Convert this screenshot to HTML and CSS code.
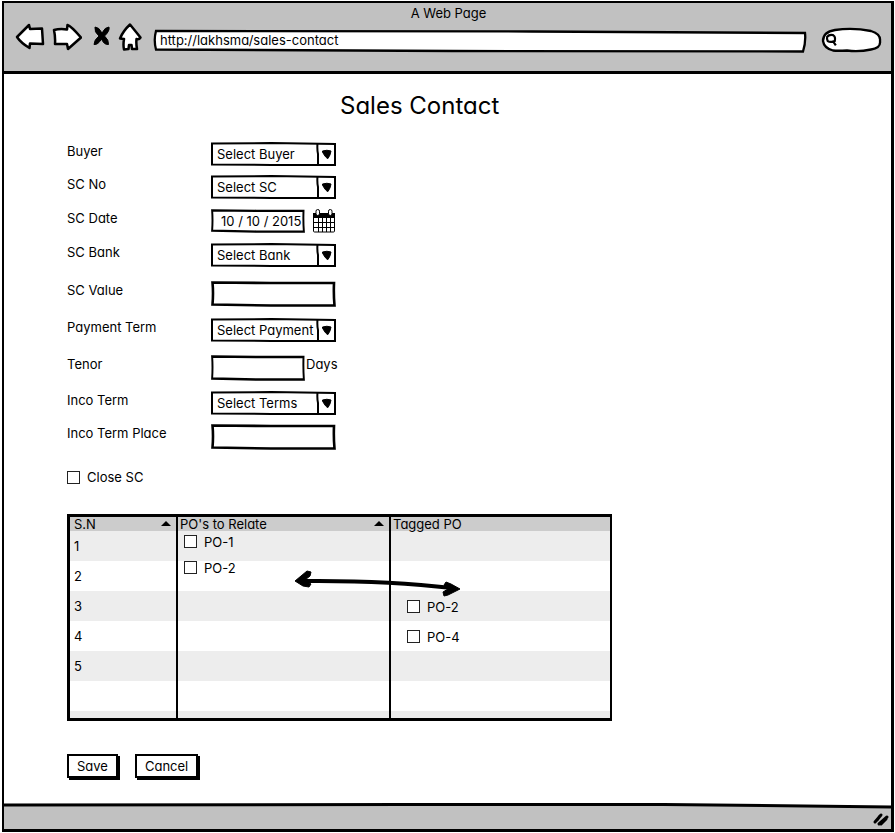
FILE: index.html
```html
<!DOCTYPE html>
<html lang="en">
<head>
<meta charset="utf-8">
<title>A Web Page</title>
<link rel="stylesheet" href="styles.css">
</head>
<body>
<div class="window">
  <header class="chrome">
    <div class="chrome-title">A Web Page</div>
    <div class="toolbar">
      <button class="tool back" type="button" aria-label="Back">
        <svg width="30" height="28" viewBox="0 0 30 28"><path d="M2 14 L14 2 L15 6 L27 5.500 L28 21 L15 20.500 L14.500 25 Q6 20 2 14Z"/></svg>
      </button>
      <button class="tool forward" type="button" aria-label="Forward">
        <svg width="30" height="28" viewBox="0 0 30 28"><path d="M2 7 Q8 5.500 15 6.500 L15.500 2 Q19 3 29 14.500 L16 26 L15 21 L3 21 Q3.500 14 2 7Z"/></svg>
      </button>
      <button class="tool stop" type="button" aria-label="Stop">
        <svg width="18" height="28" viewBox="0 0 18 28"><path class="solid" d="M2 4 Q6 4 9 10 Q12 4 16 4 Q17 8 11.500 13 Q16 17 15.500 21.500 Q11 22 8.500 16 Q5 22 1 21.500 Q1 17 6 13 Q1 9 2 4Z"/></svg>
      </button>
      <button class="tool home" type="button" aria-label="Home">
        <svg width="24" height="28" viewBox="0 0 24 28"><path d="M12 1.500 L22.500 14.500 Q21 17 18.500 16 Q18 21 19 26 L14 26 L13.500 22 L11 22 L10.500 26 L6 26.500 Q5 22 6 16 L2 15.500 Q5 8 12 1.500Z"/></svg>
      </button>
      <input class="address" type="text" value="http://lakhsma/sales-contact" aria-label="Address">
      <div class="search">
        <svg width="13" height="16" viewBox="0 0 12 14"><path d="M2 4 Q4 1.500 7.500 2.500 Q10 4 9 8 Q5 9.500 2.500 8 Q1.500 6 2 4Z M6.500 8 L8 9 L10 12"/></svg>
        <input type="search" aria-label="Search">
      </div>
    </div>
  </header>

  <main class="page">
    <h1>Sales Contact</h1>
    <form>
      <div class="fields">
        <label for="buyer">Buyer</label>
        <select id="buyer"><option>Select Buyer</option></select>

        <label for="sc-no">SC No</label>
        <select id="sc-no"><option>Select SC</option></select>

        <label for="sc-date">SC Date</label>
        <div class="inline">
          <input id="sc-date" class="short date" type="text" value="10 / 10 / 2015">
          <button class="calendar" type="button" aria-label="Pick a date">
            <svg width="24" height="24" viewBox="0 0 24 24"><rect x="1.500" y="4.500" width="21" height="18.500" rx="1" fill="#fff" stroke="#000"/><path d="M1 4h22v5H1z"/><path d="M1 13.500h22M1 18.500h22M6.500 8v15M10.500 8v15M14.500 8v15M18.500 8v15" fill="none" stroke="#000"/><rect x="4" y="0.500" width="3.500" height="6" rx="1.700" fill="#fff" stroke="#000"/><rect x="16.500" y="0.500" width="3.500" height="6" rx="1.700" fill="#fff" stroke="#000"/></svg>
          </button>
        </div>

        <label for="sc-bank">SC Bank</label>
        <select id="sc-bank"><option>Select Bank</option></select>

        <label for="sc-value">SC Value</label>
        <input id="sc-value" class="text" type="text">

        <label for="payment">Payment Term</label>
        <select id="payment"><option>Select Payment</option></select>

        <label for="tenor">Tenor</label>
        <div class="inline">
          <input id="tenor" class="text short" type="text">
          <span class="unit">Days</span>
        </div>

        <label for="inco">Inco Term</label>
        <select id="inco"><option>Select Terms</option></select>

        <label for="place">Inco Term Place</label>
        <input id="place" class="text" type="text">
      </div>

      <label class="check close"><input type="checkbox">Close SC</label>

      <div class="orders">
        <table>
          <thead>
            <tr>
              <th class="col-sn" scope="col"><span class="head">S.N<i class="sort"></i></span></th>
              <th class="col-relate" scope="col"><span class="head">PO's to Relate<i class="sort"></i></span></th>
              <th scope="col">Tagged PO</th>
            </tr>
          </thead>
          <tbody>
            <tr><td>1</td><td class="relate first"><label class="check"><input type="checkbox">PO-1</label></td><td></td></tr>
            <tr><td>2</td><td class="relate"><label class="check"><input type="checkbox">PO-2</label></td><td></td></tr>
            <tr><td>3</td><td></td><td class="tagged"><label class="check"><input type="checkbox">PO-2</label></td></tr>
            <tr><td>4</td><td></td><td class="tagged"><label class="check"><input type="checkbox">PO-4</label></td></tr>
            <tr><td>5</td><td></td><td></td></tr>
            <tr><td></td><td></td><td></td></tr>
            <tr class="partial"><td></td><td></td><td></td></tr>
          </tbody>
        </table>
        <svg class="arrow" width="168" height="28" viewBox="0 0 168 28" aria-hidden="true"><path d="M6 11 Q90 10 158 18" fill="none" stroke="#000" stroke-width="4"/><path d="M1 11 L13 1 L17 2 L16 6 L11 10 L17 14 L15 17 L9 16Z M166 19 L157 14 L152 12 L150 15 L154 19 L149 22 L150 26 L154 25Z" stroke="#000" stroke-linejoin="round"/></svg>
      </div>

      <div class="actions">
        <button class="action" type="submit">Save</button>
        <button class="action" type="button">Cancel</button>
      </div>
    </form>
  </main>

  <footer class="status">
    <svg width="18" height="16" viewBox="0 0 18 16" aria-hidden="true"><path d="M3 11 L9 4 M7 13 L15 6 M5 9 L8 5 M9 13 L14 8" fill="none" stroke="#000" stroke-width="3" stroke-linecap="round"/></svg>
  </footer>
</div>
</body>
</html>
```
FILE: styles.css
```css
* { box-sizing: border-box; }

body {
  margin: 0;
  background: #fff;
  color: #000;
  font: 13px/18px Inter, "Liberation Sans", sans-serif;
  font-feature-settings: "cv11";
}

input, select, button {
  margin: 0;
  padding: 0;
  border: 0;
  border-radius: 0;
  background: none;
  color: inherit;
  font: inherit;
  font-feature-settings: inherit;
  appearance: none;
}

.window {
  display: flex;
  flex-direction: column;
  min-height: calc(100vh - 2px);
  margin: 1px 1px 1px 2px;
  border: 2px solid #000;
  border-right-width: 3px;
  border-bottom-width: 3px;
}

.chrome {
  height: 71px;
  padding: 1px 9px 0 11px;
  border-bottom: 3px solid #000;
  background: #c1c1c1;
}

.chrome-title { text-align: center; }

.toolbar {
  display: flex;
  align-items: center;
  height: 30px;
}

.tool { display: flex; }
.tool path { fill: #fff; stroke: #000; stroke-width: 2.5px; stroke-linejoin: round; }
.tool .solid { fill: #000; stroke-width: 1px; }
.forward { margin-left: 7px; }
.stop { margin-left: 11px; }
.home { margin-left: 7px; }

.address {
  flex: 1;
  height: 24px;
  margin: 8px 14px 0 11px;
  padding: 0 7px 2px;
  background: url("data:image/svg+xml,%3Csvg xmlns='http://www.w3.org/2000/svg' viewBox='0 0 656 24' preserveAspectRatio='none'%3E%3Cpath d='M3 2 L380 2.500 L654 4 Q655 13 652 22.500 L300 22 L3 20.500 Q0.500 11 3 2Z' fill='%23fff' stroke='%23000' stroke-width='2.300'/%3E%3C/svg%3E") center / 100% 100% no-repeat;
}

.search {
  display: flex;
  align-items: center;
  width: 61px;
  height: 26px;
  margin-top: 6px;
  padding-left: 4px;
  background: url("data:image/svg+xml,%3Csvg xmlns='http://www.w3.org/2000/svg' viewBox='0 0 61 26' preserveAspectRatio='none'%3E%3Cpath d='M2 14 Q2 5 14 3 Q32 0.500 50 4 Q60 7 59 14 Q60 21 50 22.500 Q38 25 26 23.500 Q16 24 12 23.500 Q3 21 2 14Z' fill='%23fff' stroke='%23000' stroke-width='2.300'/%3E%3C/svg%3E") center / 100% 100% no-repeat;
}
.search path { fill: none; stroke: #000; stroke-width: 2px; }
.search input { width: 36px; height: 18px; }

.page { flex: 1; padding: 18px 64px 0 63px; }

h1 {
  margin: 0 0 22px;
  padding-left: 273px;
  font-size: 24px;
  line-height: 28px;
  font-weight: 400;
}

.fields {
  display: grid;
  grid-template-columns: 144px 125px;
  grid-template-rows: 33px 34px 34px 38px 37px 37px 36px 33px 26px;
  align-items: start;
  justify-content: start;
}

.fields select {
  width: 100%;
  height: 24px;
  padding: 0 20px 1px 6px;
  background: url("data:image/svg+xml,%3Csvg xmlns='http://www.w3.org/2000/svg' width='20' height='24'%3E%3Cpath d='M1.500 1 Q1 8 2 12 L2 23' fill='none' stroke='%23000' stroke-width='2'/%3E%3Cpath d='M6.500 9 Q11 7.500 15 9 Q14.500 13 12 16.500 Q10 16.500 6.500 10Z' stroke='%23000' stroke-linejoin='round'/%3E%3C/svg%3E") right center / 20px 24px no-repeat,
    url("data:image/svg+xml,%3Csvg xmlns='http://www.w3.org/2000/svg' viewBox='0 0 125 24' preserveAspectRatio='none'%3E%3Cpath d='M1 1.500 L60 1 L124 2 L124 23 L60 23 L1 22.500Z' fill='%23fff' stroke='%23000' stroke-width='2'/%3E%3C/svg%3E") center / 100% 100% no-repeat;
}

.fields input {
  width: 100%;
  height: 24px;
  padding: 0 6px;
  background: url("data:image/svg+xml,%3Csvg xmlns='http://www.w3.org/2000/svg' viewBox='0 0 125 26' preserveAspectRatio='none'%3E%3Cpath d='M1.500 1.500 L60 2 L123 2 Q122.500 14 123.500 24.500 L60 24.500 L1.500 23.500 Q2.500 12 1.500 1.500Z' fill='%23fff' stroke='%23000' stroke-width='2.600'/%3E%3C/svg%3E") center / 100% 100% no-repeat;
}
.fields .text { height: 26px; }
.fields .short { width: 94px; }
.fields .date { padding: 0 0 1px 10px; }

.inline { display: flex; align-items: flex-start; }
.calendar { display: flex; margin-left: 7px; }
.unit { margin-left: 1px; }

.check { display: inline-flex; align-items: center; gap: 7px; }
.check input {
  width: 13px;
  height: 13px;
  border: 1px solid #222;
  background: #fff;
}
.close { margin-top: 18px; }

.orders {
  position: relative;
  width: 545px;
  max-width: 100%;
  margin-top: 26px;
}

table {
  width: 100%;
  border: 3px solid #000;
  border-right-width: 2px;
  border-collapse: separate;
  border-spacing: 0;
  table-layout: fixed;
}
.col-sn { width: 106px; }
.col-relate { width: 213px; }

th {
  height: 14px;
  padding: 0 2px;
  background: #ccc;
  font-weight: 400;
  line-height: 14px;
  text-align: left;
}
th + th, td + td { border-left: 2px solid #000; }
.col-sn { padding-left: 4px; }
.head { display: flex; align-items: center; justify-content: space-between; }
.sort {
  margin-right: 3px;
  border: 5px solid transparent;
  border-top: 0;
  border-bottom-color: #000;
}

td { height: 30px; padding: 0 0 0 4px; }
tbody tr:nth-child(odd) { background: #ededed; }
.partial td { height: 7px; }
td .check { line-height: 14px; vertical-align: top; }
.relate { padding-left: 6px; vertical-align: top; line-height: 14px; }
.first { padding-top: 4px; }
.tagged { padding: 2px 0 0 16px; line-height: 14px; }

.arrow { position: absolute; top: 56px; left: 227px; }

.actions { display: flex; gap: 17px; margin-top: 33px; }
.action {
  height: 24px;
  padding: 0 8px;
  border: 2px solid #000;
  background: #fff;
  box-shadow: 2px 2px 0 #000;
}

.status {
  display: flex;
  align-items: center;
  justify-content: flex-end;
  height: 26px;
  padding: 6px 1px 0 0;
  background: url("data:image/svg+xml,%3Csvg xmlns='http://www.w3.org/2000/svg' viewBox='0 0 888 26' preserveAspectRatio='none'%3E%3Cpath d='M0 1.500 L400 1 L660 1.500 L888 4 L888 26 L0 26Z' fill='%23c1c1c1'/%3E%3Cpath d='M0 2 L400 1.500 L660 1.500 L888 4' fill='none' stroke='%23000' stroke-width='3'/%3E%3C/svg%3E") center / 100% 100% no-repeat;
}
```
